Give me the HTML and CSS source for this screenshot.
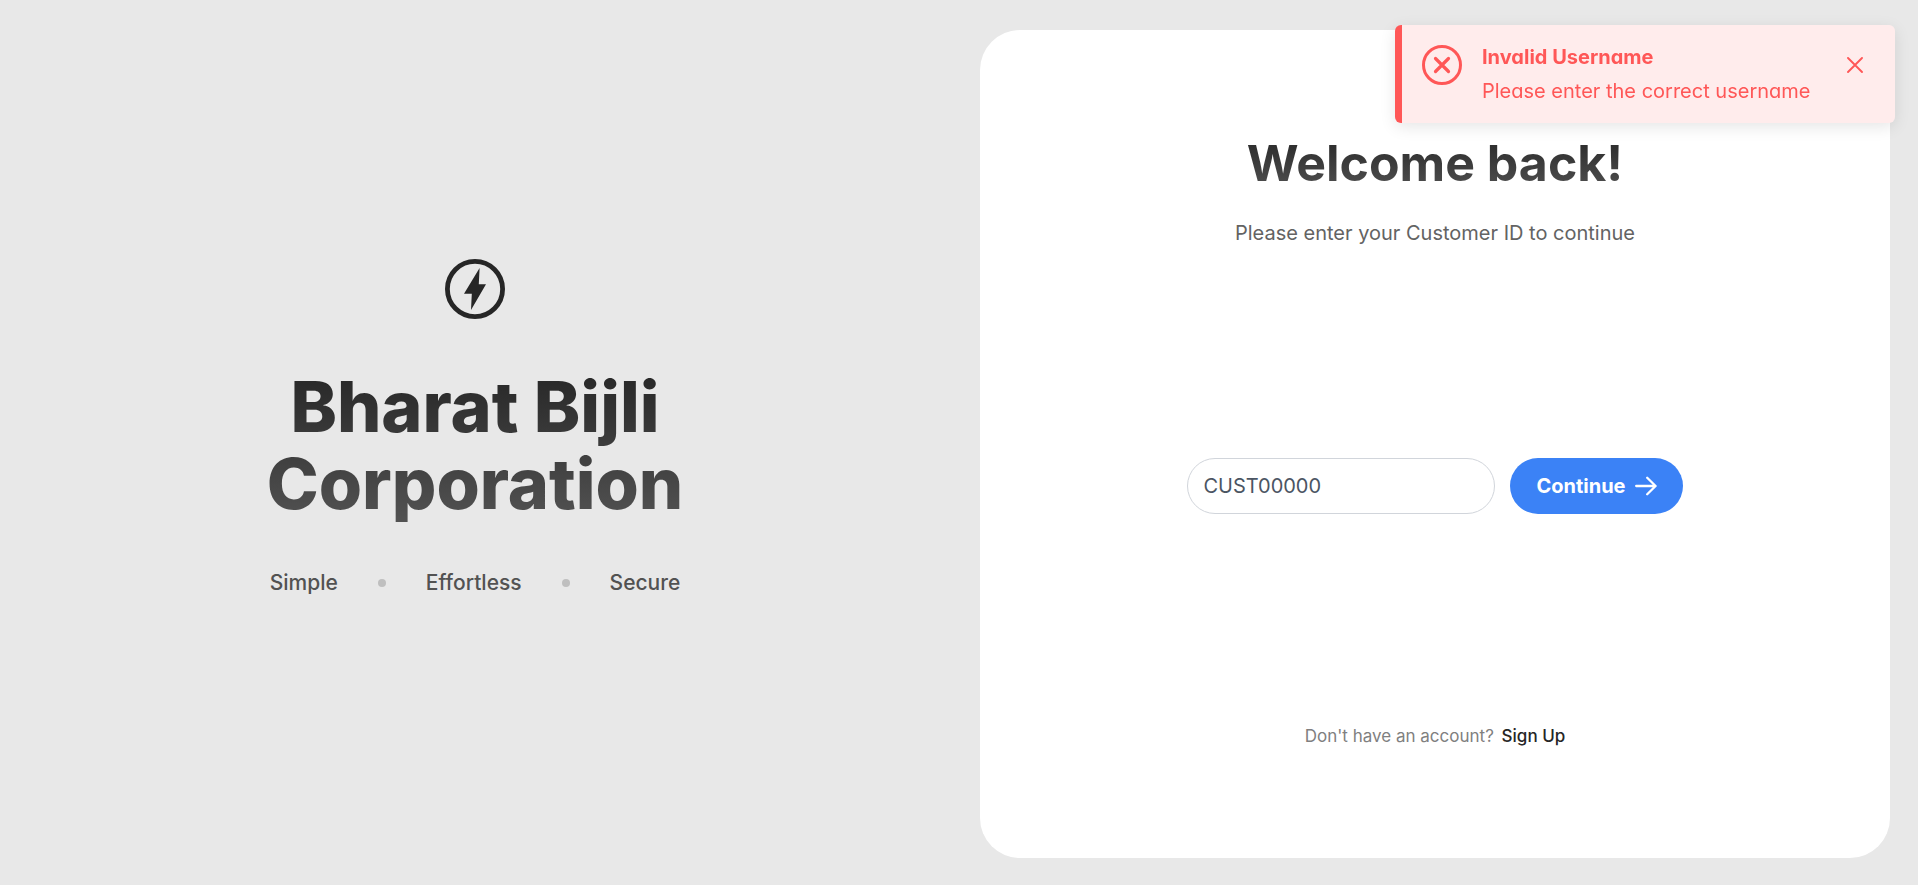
FILE: index.html
```html
<!DOCTYPE html>
<html lang="en">
<head>
<meta charset="utf-8">
<meta name="viewport" content="width=device-width, initial-scale=1">
<title>Bharat Bijli Corporation</title>
<link rel="stylesheet" href="styles.css">
</head>
<body>
<div class="page">
  <section class="brand">
    <svg class="brand-logo" viewBox="0 0 60 60" aria-hidden="true">
      <circle cx="30" cy="30" r="27.6" fill="none" stroke="currentColor" stroke-width="4.8"/>
      <path d="M34.6 9 L19 34.8 H26.8 L26 51 L41 25.2 H33.8 Z" fill="currentColor"/>
    </svg>
    <h1 class="brand-title">Bharat Bijli<br>Corporation</h1>
    <ul class="brand-values">
      <li>Simple</li>
      <li class="dot" aria-hidden="true"></li>
      <li>Effortless</li>
      <li class="dot" aria-hidden="true"></li>
      <li>Secure</li>
    </ul>
  </section>

  <main class="card">
    <header class="card-header">
      <h2 class="card-title">Welcome back!</h2>
      <p class="card-subtitle">Please enter your Customer ID to continue</p>
    </header>
    <form class="login">
      <input class="login-input" type="text" aria-label="Customer ID" value="CUST00000">
      <button class="login-button" type="submit">
        Continue
        <svg class="login-arrow" viewBox="0 0 22 20" aria-hidden="true">
          <path d="M1.2 10 H20.5 M12.2 1.8 L20.6 10 L12.2 18.2" fill="none" stroke="currentColor" stroke-width="2.3" stroke-linecap="round" stroke-linejoin="round"/>
        </svg>
      </button>
    </form>
    <p class="signup">Don't have an account? <a class="signup-link" href="#">Sign Up</a></p>
  </main>
</div>

<div class="toast" role="alert">
  <svg class="toast-icon" viewBox="0 0 40 40" aria-hidden="true">
    <circle cx="20" cy="20" r="18.5" fill="none" stroke="currentColor" stroke-width="3"/>
    <path d="M13.5 13.5 L26.5 26.5 M26.5 13.5 L13.5 26.5" stroke="currentColor" stroke-width="3.2" stroke-linecap="round"/>
  </svg>
  <div class="toast-text">
    <strong class="toast-title">Invalid Username</strong>
    <span>Please enter the correct username</span>
  </div>
  <button class="toast-close" type="button" aria-label="Close">
    <svg viewBox="0 0 16 16" width="16" height="16" aria-hidden="true">
      <path d="M1 1 L15 15 M15 1 L1 15" stroke="currentColor" stroke-width="1.9" stroke-linecap="round"/>
    </svg>
  </button>
</div>
</body>
</html>
```
FILE: styles.css
```css
* {
  box-sizing: border-box;
  margin: 0;
}

body {
  background: #e8e8e8;
  color: #262626;
  font-family: Inter, "Liberation Sans", sans-serif;
  font-size: 20px;
  line-height: 24px;
}

.page {
  display: grid;
  grid-template-columns: 95fr 91fr;
  gap: 30px;
  min-height: 100vh;
  padding: 30px 28px 27px 0;
}

.brand {
  display: flex;
  flex-direction: column;
  align-items: center;
  justify-content: center;
  gap: 49px;
  padding-bottom: 34px;
}

.brand-logo {
  width: 60px;
  height: 60px;
}

.brand-title,
.card-title {
  background: linear-gradient(#262626, #525252);
  background-clip: text;
  -webkit-background-clip: text;
  color: transparent;
  text-align: center;
}

.brand-title {
  font-size: 70px;
  font-weight: 800;
  line-height: 77px;
}

.brand-values {
  display: flex;
  align-items: center;
  gap: 40px;
  padding: 0;
  list-style: none;
  color: #525252;
  font-size: 21px;
  font-weight: 500;
}

.dot {
  width: 8px;
  height: 8px;
  border-radius: 50%;
  background: #bfbfbf;
}

.card {
  display: flex;
  flex-direction: column;
  align-items: center;
  justify-content: space-between;
  padding: 103px 40px 112px;
  border-radius: 40px;
  background: #fff;
}

.card-header {
  display: flex;
  flex-direction: column;
  align-items: center;
  gap: 28px;
}

.card-title {
  font-size: 50px;
  font-weight: 700;
  line-height: 60px;
}

.card-subtitle {
  color: #636363;
}

.login {
  display: flex;
  gap: 15px;
}

.login-input {
  width: 308px;
  height: 56px;
  padding: 0 15px;
  border: 1px solid #d1d5db;
  border-radius: 28px;
  outline: none;
  background: #fff;
  color: #4b5563;
  font: inherit;
}

.login-button {
  display: flex;
  align-items: center;
  gap: 9px;
  height: 56px;
  padding: 0 26px;
  border: 0;
  border-radius: 28px;
  background: #3b82f6;
  color: #fff;
  font: inherit;
  font-weight: 700;
}

.login-arrow {
  width: 22px;
  height: 20px;
}

.signup {
  color: #808080;
  font-size: 17px;
  line-height: 20px;
}

.signup-link {
  margin-left: 3px;
  color: #262626;
  font-weight: 500;
  text-decoration: none;
}

.toast {
  position: fixed;
  top: 25px;
  right: 23px;
  display: flex;
  align-items: flex-start;
  width: 500px;
  padding: 20px;
  border-left: 7px solid #ff5757;
  border-radius: 6px;
  background: #ffecec;
  box-shadow: 0 4px 16px rgba(0, 0, 0, 0.1);
  color: #ff5757;
  font-feature-settings: "cv02", "cv03", "cv04", "cv11";
}

.toast-icon {
  flex: none;
  width: 40px;
  height: 40px;
}

.toast-text {
  display: flex;
  flex: 1;
  flex-direction: column;
  gap: 10px;
  margin-left: 20px;
}

.toast-title {
  font-weight: 700;
}

.toast-close {
  display: flex;
  flex: none;
  align-items: center;
  justify-content: center;
  width: 40px;
  height: 40px;
  padding: 0;
  border: 0;
  background: none;
  color: inherit;
}
```
